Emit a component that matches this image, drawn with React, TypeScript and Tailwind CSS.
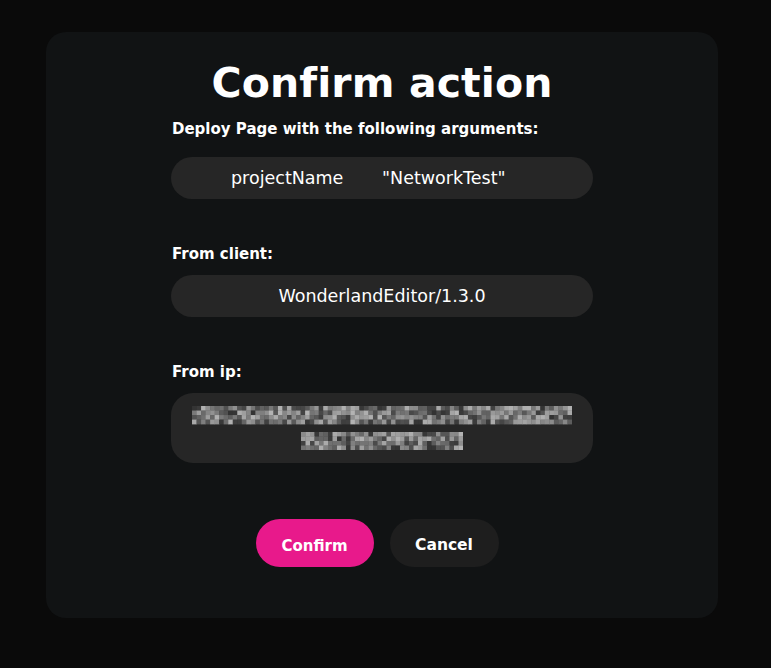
const FONT = { fontFamily: "'DejaVu Sans', 'Noto Sans', sans-serif" };

// deterministic pseudo-random so the mosaic stays the same on every render
function mulberry(seed: number) {
    return () => {
        seed |= 0;
        seed = (seed + 0x6d2b79f5) | 0;
        let t = Math.imul(seed ^ (seed >>> 15), 1 | seed);
        t = (t + Math.imul(t ^ (t >>> 7), 61 | t)) ^ t;
        return ((t ^ (t >>> 14)) >>> 0) / 4294967296;
    };
}

function Mosaic({ width, cols, rows, seed }: { width: number; cols: number; rows: number; seed: number }) {
    const rand = mulberry(seed);
    const cell = width / cols;
    const cells = [];
    for (let r = 0; r < rows; r++) {
        for (let c = 0; c < cols; c++) {
            const v = rand();
            const g = Math.round(50 + v * 130);
            cells.push(
                <rect key={`${r}-${c}`} x={c * cell} y={r * cell} width={cell + 0.3} height={cell + 0.3} fill={`rgb(${g},${g},${g})`} />
            );
        }
    }
    return (
        <svg width={width} height={rows * cell} viewBox={`0 0 ${width} ${rows * cell}`} className="block">
            {cells}
        </svg>
    );
}

export default function App() {
    return (
        <div className="min-h-[668px] w-full bg-[#0a0a0a] pt-[32px]" style={FONT}>
            <div className="ml-[46px] w-[672px] h-[586px] rounded-[20px] bg-[#111314] pt-[27px] flex flex-col items-center">
                <h1 className="text-[41px] leading-[48px] font-bold text-white tracking-[0.1px]">Confirm action</h1>

                <div className="w-[422px] mt-[11px]">
                    <p className="pl-[1px] pt-[1px] text-[15px] leading-[20px] font-bold text-white">
                        Deploy Page with the following arguments:
                    </p>
                    <div className="mt-[18px] h-[42px] rounded-full bg-[#262626] flex items-center text-[17.5px] text-white">
                        <span className="ml-[60px] w-[151px]">projectName</span>
                        <span>"NetworkTest"</span>
                    </div>

                    <p className="mt-[45px] pl-[1px] text-[15px] leading-[20px] font-bold text-white">From client:</p>
                    <div className="mt-[11px] h-[42px] rounded-full bg-[#262626] flex items-center justify-center text-[17.5px] text-white">
                        WonderlandEditor/1.3.0
                    </div>

                    <p className="mt-[45px] pl-[1px] text-[15px] leading-[20px] font-bold text-white">From ip:</p>
                    <div className="mt-[11px] h-[70px] rounded-[22px] bg-[#262626] flex flex-col items-center justify-center gap-[7px]">
                        <Mosaic width={380} cols={84} rows={4} seed={7} />
                        <Mosaic width={162} cols={36} rows={4} seed={31} />
                    </div>
                </div>

                <div className="mt-[56px] -ml-[10px] flex gap-[16px]">
                    <button className="h-[48px] w-[118px] pt-[6px] rounded-full bg-[#e8198b] text-white text-[15px] font-bold">
                        Confirm
                    </button>
                    <button className="h-[48px] w-[109px] pt-[6px] rounded-full bg-[#1e1e1e] text-white text-[15.5px] font-bold">
                        Cancel
                    </button>
                </div>
            </div>
        </div>
    );
}
